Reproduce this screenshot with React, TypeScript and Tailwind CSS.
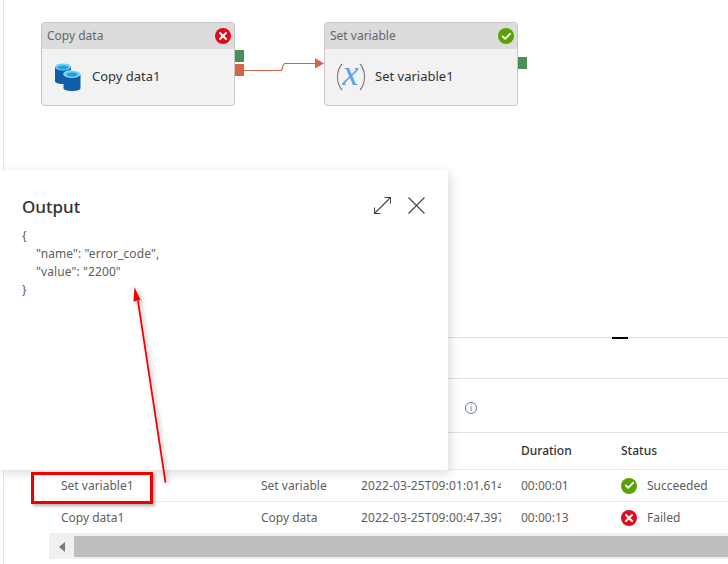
import { Check, X } from "lucide-react";

const font = { fontFamily: '"Noto Sans", sans-serif' };

function StatusDot({ ok, size = 16 }: { ok: boolean; size?: number }) {
  return (
    <span
      className={`flex shrink-0 items-center justify-center rounded-full ${ok ? "bg-[#57a300]" : "bg-[#e00b1c]"}`}
      style={{ width: size, height: size }}
    >
      {ok ? (
        <Check size={size - 5} strokeWidth={4} className="text-white" />
      ) : (
        <X size={size - 4} strokeWidth={4} className="text-white" />
      )}
    </span>
  );
}

function CopyIcon() {
  return (
    <svg width="26" height="28" viewBox="0 0 26 28">
      <path d="M0 4v14c0 2 3 3 8 3s8-1 8-3V4z" fill="#0f5fa8" />
      <ellipse cx="8" cy="4" rx="8" ry="3.500" fill="#5fd4ef" />
      <ellipse cx="8" cy="4.500" rx="5.500" ry="2" fill="#2a9fd6" />
      <path d="M8.500 11v14c0 2 3.500 3 8.500 3s8.500-1 8.500-3V11z" fill="#0f5fa8" />
      <ellipse cx="17" cy="11" rx="8.500" ry="3.500" fill="#5fd4ef" stroke="#fff" strokeWidth=".5" />
      <ellipse cx="17" cy="11.500" rx="5.500" ry="2" fill="#2a9fd6" />
    </svg>
  );
}

function VarIcon() {
  return (
    <svg className="-ml-[3px] -mr-[2px] overflow-visible" width="31" height="28" viewBox="0 0 31 28" fill="none">
      <path d="M7 1C1 8 1 20 7 27" stroke="#808080" strokeWidth="1.200" />
      <path d="M25 1c6 7 6 19 0 26" stroke="#808080" strokeWidth="1.200" />
      <text x="7.500" y="22" fontSize="36" fontStyle="italic" fill="#5ea0ef" style={{ fontFamily: '"Liberation Serif", serif' }}>
        x
      </text>
    </svg>
  );
}

function Node({ title, name, ok, icon }: { title: string; name: string; ok: boolean; icon: React.ReactNode }) {
  return (
    <div className="flex h-[84px] w-[194px] flex-col overflow-hidden rounded-[3px] border border-[#c8c8c8] bg-[#f2f2f2]">
      <div className="flex h-[26px] items-center justify-between bg-[#dcdcdc] pl-[5px] pr-[3px] text-[12px] text-[#666]">
        <span>{title}</span>
        <StatusDot ok={ok} />
      </div>
      <div className="flex flex-1 items-center gap-[11px] pl-[13px]">
        {icon}
        <span className="text-[13px] text-[#333]">{name}</span>
      </div>
    </div>
  );
}

function Row({ name, type, start, dur, ok, status, last }: { name: string; type: string; start: string; dur: string; ok: boolean; status: string; last?: boolean }) {
  return (
    <div className={`ml-[45px] flex items-center pl-[12px] text-[12px] text-[#605e5c] ${last ? "h-[31px] pt-[1px]" : "h-[32px] border-b border-[#edebe9]"}`}>
      <span className="w-[200px]">{name}</span>
      <span className="w-[100px]">{type}</span>
      <span className="w-[140px] overflow-hidden whitespace-nowrap tracking-[0.12px]">{start}</span>
      <span className="ml-[20px] w-[100px]">{dur}</span>
      <StatusDot ok={ok} />
      <span className="ml-[10px]">{status}</span>
    </div>
  );
}

export default function App() {
  return (
    <div className="relative flex h-[564px] w-[728px] flex-col overflow-hidden bg-white" style={font}>
      <div className="ml-[3px] flex h-[170px] shrink-0 items-start border-l border-[#e6e6e6] pl-[37px] pt-[22px]">
        <Node title="Copy data" name="Copy data1" ok={false} icon={<CopyIcon />} />
        <div className="mt-[28px] flex flex-col gap-[2px]">
          <span className="h-[12px] w-[9px] bg-[#4a8f58]" />
          <span className="h-[12px] w-[9px] bg-[#d0674a]" />
        </div>
        <div className="ml-[80px]">
          <Node title="Set variable" name="Set variable1" ok icon={<VarIcon />} />
        </div>
        <span className="mt-[35px] h-[12px] w-[9px] bg-[#4a8f58]" />
      </div>

      <div className="ml-[3px] flex-1 border-l border-[#e6e6e6]">
        <div className="relative h-[168px] border-b border-[#e1e1e1]">
          <span className="absolute right-[100px] top-[167px] h-[2px] w-[16px] bg-black" />
        </div>
        <div className="h-[41px] border-b border-[#e1e1e1]" />
        <div className="flex h-[54px] items-center border-b border-[#e1e1e1] pl-[461px] pt-[5px]">
          <span className="flex h-[12px] w-[12px] items-center justify-center rounded-full border border-[#5b7fa6] text-[8px] leading-none text-[#8a4a6a]">i</span>
        </div>
        <div className="flex h-[37px] items-center border-b border-[#edebe9] pl-[517px] text-[12px] font-medium text-[#323130]">
          <span className="w-[100px]">Duration</span>
          <span>Status</span>
        </div>
        <Row name="Set variable1" type="Set variable" start="2022-03-25T09:01:01.614" dur="00:00:01" ok status="Succeeded" />
        <Row name="Copy data1" type="Copy data" start="2022-03-25T09:00:47.397" dur="00:00:13" ok={false} status="Failed" last />
        <div className="ml-[45px] flex h-[26px] items-center bg-[#f0f0f0] pb-[2px] pt-[3px]">
          <span className="flex w-[25px] justify-center">
            <span className="h-0 w-0 border-y-[5px] border-r-[6px] border-y-transparent border-r-[#7a7a7a]" />
          </span>
          <span className="h-full flex-1 bg-[#bebebe]" />
        </div>
      </div>

      {/* Output flyout over the pipeline */}
      <div className="absolute left-0 top-[170px] h-[300px] w-[448px] bg-white px-[22px] pt-[25px] shadow-[2px_3px_10px_rgba(0,0,0,0.15)]">
        <div className="flex items-start justify-between">
          <span className="text-[17px] font-medium leading-[24px] text-[#323130]">Output</span>
          <div className="mr-[1px] flex gap-[17px] pt-[2px]">
            <svg width="17" height="17" viewBox="0 0 17 17" fill="none" stroke="#444" strokeWidth="1.100">
              <path d="M.5 16.500 16.500.5M10.500.5h6v6M.5 10.500v6h6" />
            </svg>
            <svg width="17" height="17" viewBox="0 0 17 17" fill="none" stroke="#444" strokeWidth="1.100">
              <path d="M.5.5l16 16M16.500.5l-16 16" />
            </svg>
          </div>
        </div>
        <div className="mt-[8px] text-[12px] leading-[18px] tracking-[0.1px] text-[#605e5c]">
          <div>{"{"}</div>
          <div className="pl-[14px]">"name": "error_code",</div>
          <div className="pl-[14px]">"value": "2200"</div>
          <div>{"}"}</div>
        </div>
      </div>

      {/* Connector between the two activities */}
      <svg className="absolute left-[244px] top-[55px]" width="82" height="22" viewBox="0 0 82 22" fill="none">
        <path d="M0 15.500h37c2 0 1-7 4-7h30" stroke="#d0674a" strokeWidth="1.200" />
        <path d="M71 3l9 5.500-9 5z" fill="#d0674a" />
      </svg>

      {/* Annotation arrow and highlight */}
      <svg className="absolute left-[125px] top-[285px]" width="50" height="205" viewBox="0 0 50 205" fill="none">
        <g style={{ filter: "drop-shadow(2px 2px 2px rgba(0,0,0,0.35))" }}>
          <path d="M40.500 197.500 13 16" stroke="#f00000" strokeWidth="1.700" />
          <path d="M9.500 2 15.500 15 8.500 16.500z" fill="#f00000" />
        </g>
      </svg>
      <div className="absolute left-[31px] top-[472px] h-[32px] w-[122px] border-[3px] border-[#ee0000] shadow-[2px_2px_3px_rgba(0,0,0,0.3)]" />
    </div>
  );
}
